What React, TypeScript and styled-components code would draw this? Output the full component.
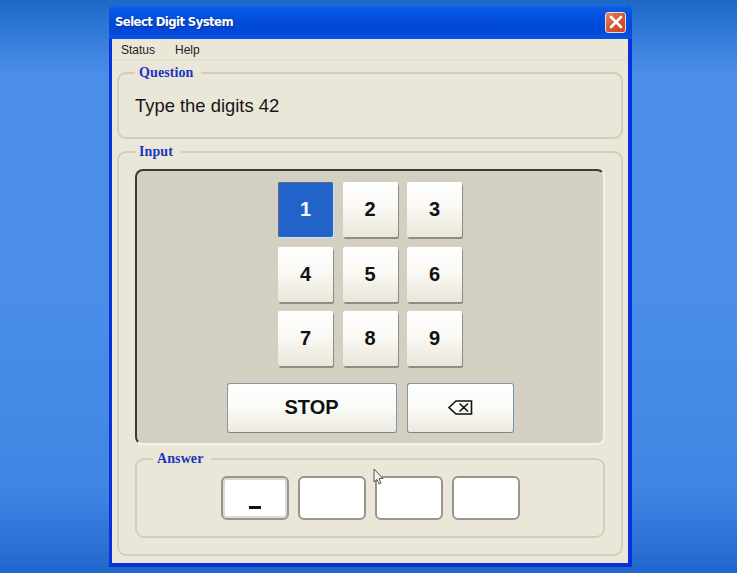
import styled, { createGlobalStyle } from 'styled-components';

const GlobalStyle = createGlobalStyle`
  html, body { margin: 0; padding: 0; height: 100%; overflow: hidden; }
  * { box-sizing: border-box; }
`;

const Desktop = styled.div`
  position: relative;
  width: 737px;
  height: 573px;
  padding: 5px 0 0 109px;
  background: linear-gradient(180deg, #1e68c8 0%, #2f78d8 5%, #4a8ee8 13%, #4a8ee8 50%, #3f86e4 85%, #2a6fd4 96%, #1f66cc 100%);
`;

const Window = styled.div`
  width: 523px;
  height: 562px;
  display: flex;
  flex-direction: column;
  background: #0831d9;
  border-radius: 7px 7px 0 0;
  padding: 0 4px 3px 3px;
  border-bottom: 1px solid #0a2fb8;
`;

const TitleBar = styled.div`
  height: 34px;
  flex: none;
  margin: 0 -4px 0 -3px;
  padding: 0 6px 0 6px;
  display: flex;
  align-items: center;
  justify-content: space-between;
  border-radius: 7px 7px 0 0;
  background: linear-gradient(180deg, #1a6ae8 0%, #0a5ae6 10%, #0453df 30%, #0047d8 70%, #0a52e2 100%);
`;

const Title = styled.span`
  margin-bottom: 2px;
  color: #fff;
  font: 700 13px "DejaVu Sans Condensed", "DejaVu Sans", sans-serif;
  letter-spacing: -0.6px;
  text-shadow: 1px 1px 1px #0a2f90;
`;

const CloseButton = styled.button`
  width: 21px;
  height: 21px;
  padding: 0;
  display: flex;
  align-items: center;
  justify-content: center;
  border: 1px solid #e9dcd6;
  border-radius: 3px;
  background: linear-gradient(135deg, #e08a6c 0%, #d8583a 45%, #c8431f 100%);
`;

const Client = styled.div`
  flex: 1;
  min-height: 0;
  display: flex;
  flex-direction: column;
  background: #ebe7d8;
  padding: 0 5px 7px;
`;

const MenuBar = styled.div`
  height: 21px;
  flex: none;
  margin: 0 -5px;
  padding: 1px 0 0 9px;
  display: flex;
  gap: 20px;
  align-items: center;
  border-bottom: 1px solid #e1ddcd;
  font: 12px "Liberation Sans", sans-serif;
  color: #1c1c1c;
`;

const Group = styled.fieldset<{ $height: number; $top: number }>`
  margin: ${p => p.$top}px 0 0;
  padding: 0 16px;
  height: ${p => p.$height}px;
  flex: none;
  min-width: 0;
  border: 2px solid #d2cebb;
  border-radius: 9px;
`;

const Legend = styled.legend<{ $indent: number }>`
  margin-left: ${p => p.$indent}px;
  padding: 0 8px 0 4px;
  font: 700 14px "Liberation Serif", serif;
  line-height: 16px;
  letter-spacing: 0.1px;
  color: #1c34c0;
`;

const Prompt = styled.div`
  padding: 14px 0 0;
  font: 18.4px "Liberation Sans", sans-serif;
  line-height: 22px;
  color: #161616;
`;

const KeyPanel = styled.div`
  margin-top: 9px;
  height: 276px;
  padding-top: 11px;
  display: flex;
  flex-direction: column;
  align-items: center;
  background: #d3d0c2;
  border-radius: 8px;
  border-top: 2px solid #3a3a34;
  border-left: 2px solid #3a3a34;
  border-right: 2px solid #f3f1e7;
  border-bottom: 2px solid #f3f1e7;
`;

const Digits = styled.div`
  display: grid;
  grid-template-columns: repeat(3, 55px);
  grid-auto-rows: 55px;
  gap: 9.5px;
`;

const DigitKey = styled.button<{ $active?: boolean }>`
  padding: 0;
  border: none;
  border-radius: 2px;
  font: 700 20px "Liberation Sans", sans-serif;
  color: ${p => (p.$active ? '#f4f6fc' : '#111')};
  background: ${p => (p.$active ? '#2263c9' : 'linear-gradient(180deg, #ffffff 0%, #faf9f5 45%, #e9e6da 100%)')};
  box-shadow: ${p => (p.$active
    ? 'inset 1px 1px 0 #5a6a80, 1px 1px 0 #cfe0f5'
    : '1px 2px 0 #8f8c80')};
`;

const ActionRow = styled.div`
  display: flex;
  gap: 10px;
  margin: 17px 0 0 0;
`;

const ActionKey = styled.button<{ $width: number }>`
  width: ${p => p.$width}px;
  height: 50px;
  padding: 0 0 2px;
  display: flex;
  align-items: center;
  justify-content: center;
  border: 1px solid #8d93a0;
  border-right-color: #7a94b8;
  border-bottom-color: #85847c;
  border-radius: 3px;
  font: 700 20px "Liberation Sans", sans-serif;
  color: #111;
  background: linear-gradient(180deg, #ffffff 0%, #fafaf7 50%, #ebe9e0 100%);
`;

const AnswerGroup = styled.fieldset`
  margin: 6px 0 0;
  padding: 9px 0 0 84px;
  height: 87px;
  min-width: 0;
  display: flex;
  gap: 9px;
  border: 2px solid #d2cebb;
  border-radius: 9px;
`;

const AnswerSlot = styled.div<{ $current?: boolean }>`
  width: 68px;
  height: 44px;
  display: flex;
  align-items: flex-end;
  justify-content: center;
  padding-bottom: 9px;
  background: #fff;
  border: 2px solid #98958c;
  border-radius: 6px;
  box-shadow: ${p => (p.$current ? 'inset 0 0 0 2px #dcdad2' : 'none')};
`;

const Caret = styled.span`
  width: 12px;
  height: 3px;
  background: #111;
`;

const Pointer = styled.svg`
  position: absolute;
  left: 373px;
  top: 468px;
`;

const digits = [1, 2, 3, 4, 5, 6, 7, 8, 9];

export default function App() {
  return (
    <Desktop>
      <GlobalStyle />
      <Window>
        <TitleBar>
          <Title>Select Digit System</Title>
          <CloseButton aria-label="Close">
            <svg width="14" height="14" viewBox="0 0 14 14">
              <path d="M2 2 L12 12 M12 2 L2 12" stroke="#fff" strokeWidth="2.6" strokeLinecap="round" />
            </svg>
          </CloseButton>
        </TitleBar>
        <Client>
          <MenuBar>
            <span>Status</span>
            <span>Help</span>
          </MenuBar>
          <Group $height={74} $top={5}>
            <Legend $indent={0}>Question</Legend>
            <Prompt>Type the digits 42</Prompt>
          </Group>
          <Group $height={412} $top={5}>
            <Legend $indent={0}>Input</Legend>
            <KeyPanel>
              <Digits>
                {digits.map(d => (
                  <DigitKey key={d} $active={d === 1}>{d}</DigitKey>
                ))}
              </Digits>
              <ActionRow>
                <ActionKey $width={170}>STOP</ActionKey>
                <ActionKey $width={107}>
                  <svg width="25" height="15" viewBox="0 0 25 15">
                    <path d="M1 7.5 L8 1 H23.5 V14 H8 Z M11.5 3.5 L20 11.5 M20 3.5 L11.5 11.5" fill="none" stroke="#111" strokeWidth="1.6" />
                  </svg>
                </ActionKey>
              </ActionRow>
            </KeyPanel>
            <AnswerGroup>
              <Legend $indent={-68}>Answer</Legend>
              <AnswerSlot $current><Caret /></AnswerSlot>
              <AnswerSlot />
              <AnswerSlot />
              <AnswerSlot />
            </AnswerGroup>
          </Group>
        </Client>
      </Window>
      <Pointer width="12" height="18" viewBox="0 0 12 18">
        <path d="M1 1 L1 14 L4 11.5 L6 16 L8 15 L6 10.5 L10 10.5 Z" fill="#f4f3ee" stroke="#55565a" strokeWidth="1" />
      </Pointer>
    </Desktop>
  );
}
